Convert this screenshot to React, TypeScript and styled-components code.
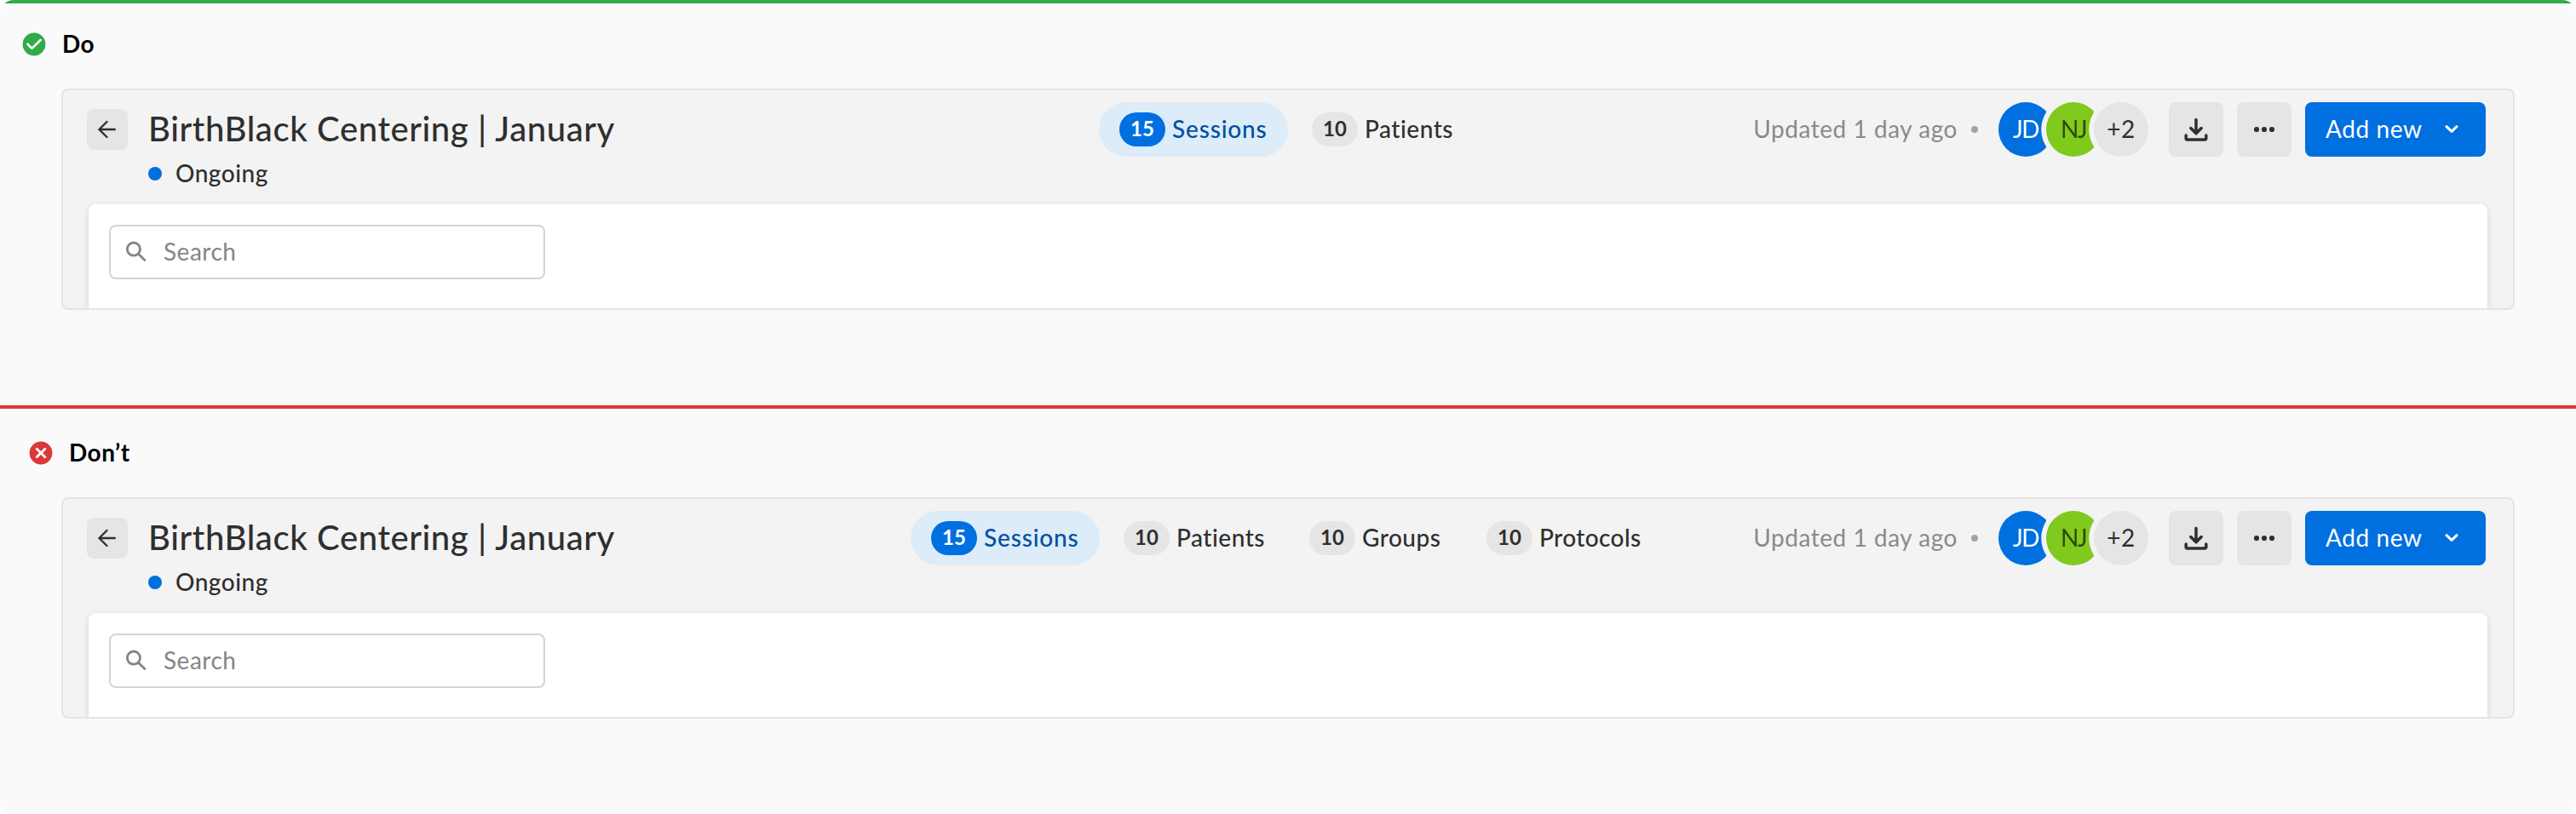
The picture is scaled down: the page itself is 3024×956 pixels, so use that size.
import React from 'react';
import styled, { createGlobalStyle, css } from 'styled-components';

const GlobalStyle = createGlobalStyle`
  *, *::before, *::after { box-sizing: border-box; }
  body {
    margin: 0;
    background: #ffffff;
    color: #2f2f2f;
    font-family: Lato, "Open Sans", "Liberation Sans", sans-serif;
    font-size: 28px;
    line-height: 38px;
    -webkit-font-smoothing: antialiased;
  }
  svg { display: block; flex: none; }
`;

const Page = styled.main`
  width: 3024px;
  height: 956px;
  border-radius: 16px;
  overflow: hidden;
  background: #fafafa;
`;

const Example = styled.section<{ $color: string; $height: number }>`
  height: ${(p) => p.$height}px;
  border-top: 4px solid ${(p) => p.$color};
  padding: ${(p) => p.$height - 448}px 72px 0 0;
`;

const Verdict = styled.h2<{ $indent: number; $after: number }>`
  display: flex;
  align-items: center;
  gap: 19px;
  height: 40px;
  margin: 0 0 ${(p) => p.$after}px;
  padding-left: ${(p) => p.$indent}px;
  color: #000000;
  font-size: 28px;
  font-weight: 700;
`;

const Label = styled.span<{ $spacing?: number; $width?: number }>`
  padding-bottom: 2px;
  letter-spacing: ${(p) => p.$spacing ?? 0.5}px;
  white-space: nowrap;
  ${(p) => p.$width && css`width: ${p.$width}px;`}
`;

const Card = styled.div`
  height: 260px;
  margin-left: 72px;
  padding: 14px 30px 0 28px;
  border: 2px solid #e4e4e4;
  border-radius: 8px;
  background: #f3f3f3;
  overflow: hidden;
`;

const Header = styled.header`
  display: grid;
  grid-template-columns: 1fr auto 1fr;
  align-items: start;
  height: 120px;
  margin-right: 2px;
`;

const Heading = styled.div`
  display: flex;
  gap: 24px;
  padding-top: 8px;
`;

const BackButton = styled.button`
  display: grid;
  place-items: center;
  width: 48px;
  height: 48px;
  padding: 0;
  border: 0;
  border-radius: 8px;
  background: #e5e5e5;
`;

const Title = styled.h1`
  margin: -1px 0 8px;
  font-size: 40px;
  font-weight: 500;
  line-height: 48px;
  letter-spacing: 0.61px;
  white-space: nowrap;
`;

const Status = styled.div`
  display: flex;
  align-items: center;
  gap: 16px;
  height: 42px;
  font-weight: 500;

  &::before {
    content: '';
    width: 16px;
    height: 16px;
    border-radius: 50%;
    background: #0070e0;
  }
`;

const Tabs = styled.nav`
  display: flex;
  gap: 4px;
`;

const Tab = styled.a<{ $active?: boolean }>`
  display: flex;
  align-items: center;
  gap: 8px;
  height: 64px;
  padding: 0 24px;
  border-radius: 32px;
  font-weight: 500;
  color: ${(p) => (p.$active ? '#0050a0' : '#2f2f2f')};
  background: ${(p) => (p.$active ? '#dcecf9' : 'transparent')};
`;

const Count = styled.span<{ $active?: boolean }>`
  display: grid;
  place-items: center;
  width: 54px;
  height: 40px;
  padding-bottom: 2px;
  border-radius: 20px;
  font-size: 24px;
  font-weight: 700;
  color: ${(p) => (p.$active ? '#ffffff' : '#2f2f2f')};
  background: ${(p) => (p.$active ? '#0070e0' : '#e5e5e5')};
`;

const Actions = styled.div`
  display: flex;
  justify-content: flex-end;
  align-items: center;
`;

const Updated = styled.span`
  display: flex;
  align-items: center;
  color: #8a8a8a;

  &::after {
    content: '';
    width: 8px;
    height: 8px;
    margin: 0 24px 0 16px;
    border-radius: 50%;
    background: #a3a3a3;
  }
`;

const Avatars = styled.div`
  display: flex;
  margin-right: 24px;
`;

const AvatarSlot = styled.div<{ $cut?: boolean }>`
  width: ${(p) => (p.$cut ? 56 : 64)}px;
  height: 64px;
  overflow: hidden;
  ${(p) =>
    p.$cut &&
    css`
      mask-image: radial-gradient(circle at 88px 32px, transparent 37.2px, #000 38.2px);
    `}
`;

const Avatar = styled.div<{ $bg: string; $fg: string }>`
  display: grid;
  place-items: center;
  width: 64px;
  height: 64px;
  border-radius: 50%;
  color: ${(p) => p.$fg};
  background: ${(p) => p.$bg};
`;

const IconButton = styled.button`
  display: grid;
  place-items: center;
  width: 64px;
  height: 64px;
  margin-right: 16px;
  padding: 0;
  border: 0;
  border-radius: 8px;
  background: #e5e5e5;
`;

const PrimaryButton = styled.button`
  display: flex;
  align-items: center;
  justify-content: space-between;
  width: 212px;
  height: 64px;
  padding: 0 32px 0 24px;
  border: 0;
  border-radius: 8px;
  color: #ffffff;
  background: #0070e0;
  font: inherit;
`;

const Panel = styled.div`
  height: 140px;
  margin-left: 2px;
  padding: 24px;
  border-radius: 8px 8px 0 0;
  background: #ffffff;
  box-shadow: 0 2px 8px rgba(0, 0, 0, 0.12);
`;

const SearchField = styled.div`
  display: flex;
  align-items: center;
  gap: 19px;
  width: 512px;
  height: 64px;
  padding-left: 17px;
  border: 2px solid #d4d4d4;
  border-radius: 8px;
  background: #ffffff;
  color: #858585;
`;

const CheckIcon = () => (
  <svg width="28" height="28" viewBox="0 0 28 28" fill="none">
    <circle cx="14" cy="14" r="13.4" fill="#30ab48" />
    <path d="M6.4 13.8l5 5.1L21.6 9" stroke="#fff" strokeWidth="2.7" strokeLinecap="round" strokeLinejoin="round" />
  </svg>
);

const CrossIcon = () => (
  <svg width="28" height="28" viewBox="0 0 28 28" fill="none">
    <circle cx="14" cy="14" r="13.4" fill="#dc3838" />
    <path d="M9.2 9.2l9.6 9.6M18.8 9.2l-9.6 9.6" stroke="#fff" strokeWidth="2.8" strokeLinecap="round" />
  </svg>
);

const BackIcon = () => (
  <svg width="24" height="24" viewBox="0 0 24 24" fill="none" stroke="#2f2f2f" strokeWidth="2.4" strokeLinecap="round" strokeLinejoin="round">
    <path d="M20.8 12H2.4M11.5 3l-9.1 9 9.1 9" />
  </svg>
);

const DownloadIcon = () => (
  <svg width="32" height="32" viewBox="0 0 32 32" fill="none" stroke="#2f2f2f" strokeWidth="3.5" strokeLinecap="round" strokeLinejoin="round">
    <path d="M16 4.4v16.4M9.8 14.6l6.2 6.2 6.2-6.2" />
    <path d="M4.2 22.9v3.7a1.4 1.4 0 0 0 1.4 1.4h20.8a1.4 1.4 0 0 0 1.4-1.4v-3.7" />
  </svg>
);

const MoreIcon = () => (
  <svg width="28" height="8" viewBox="0 0 28 8" fill="#2f2f2f">
    <circle cx="5" cy="4" r="3.1" />
    <circle cx="14" cy="4" r="3.1" />
    <circle cx="23" cy="4" r="3.1" />
  </svg>
);

const ChevronIcon = () => (
  <svg width="16" height="12" viewBox="0 0 16 12" fill="none" stroke="#fff" strokeWidth="3" strokeLinecap="round" strokeLinejoin="round">
    <path d="M2 2.7l6 5.6 6-5.6" />
  </svg>
);

const SearchIcon = () => (
  <svg width="26" height="26" viewBox="0 0 26 26" fill="none" stroke="#858585" strokeLinecap="round">
    <circle cx="9.9" cy="9.6" r="7.6" strokeWidth="2.8" />
    <path d="M15.7 15.4l7.2 7.2" strokeWidth="2.8" />
  </svg>
);

type TabItem = { count: number; label: string; spacing: number; width: number };

const tabItems: TabItem[] = [
  { count: 15, label: 'Sessions', spacing: 0.84, width: 112 },
  { count: 10, label: 'Patients', spacing: 0.52, width: 104 },
  { count: 10, label: 'Groups', spacing: 0.5, width: 94 },
  { count: 10, label: 'Protocols', spacing: 0.4, width: 120 },
];

function SessionCard({ tabs }: { tabs: TabItem[] }) {
  return (
    <Card>
      <Header>
        <Heading>
          <BackButton aria-label="Back">
            <BackIcon />
          </BackButton>
          <div>
            <Title>BirthBlack Centering | January</Title>
            <Status>
              <Label>Ongoing</Label>
            </Status>
          </div>
        </Heading>
        <Tabs>
          {tabs.map((tab, i) => (
            <Tab key={tab.label} $active={i === 0}>
              <Count $active={i === 0}>{tab.count}</Count>
              <Label $spacing={tab.spacing} $width={tab.width}>
                {tab.label}
              </Label>
            </Tab>
          ))}
        </Tabs>
        <Actions>
          <Updated>
            <Label $spacing={0.54}>Updated 1 day ago</Label>
          </Updated>
          <Avatars>
            <AvatarSlot $cut>
              <Avatar $bg="#0070e0" $fg="#ffffff">
                <Label $spacing={-1.6}>JD</Label>
              </Avatar>
            </AvatarSlot>
            <AvatarSlot $cut>
              <Avatar $bg="#80c91d" $fg="#2c4a08">
                <Label $spacing={-1.6}>NJ</Label>
              </Avatar>
            </AvatarSlot>
            <AvatarSlot>
              <Avatar $bg="#e5e5e5" $fg="#2f2f2f">
                <Label>+2</Label>
              </Avatar>
            </AvatarSlot>
          </Avatars>
          <IconButton aria-label="Download">
            <DownloadIcon />
          </IconButton>
          <IconButton aria-label="More">
            <MoreIcon />
          </IconButton>
          <PrimaryButton>
            <Label $spacing={0.6}>Add new</Label>
            <ChevronIcon />
          </PrimaryButton>
        </Actions>
      </Header>
      <Panel>
        <SearchField>
          <SearchIcon />
          <Label>Search</Label>
        </SearchField>
      </Panel>
    </Card>
  );
}

export default function App() {
  return (
    <>
      <GlobalStyle />
      <Page>
        <Example $color="#30ab48" $height={476}>
          <Verdict $indent={26} $after={32}>
            <CheckIcon />
            <Label>Do</Label>
          </Verdict>
          <SessionCard tabs={tabItems.slice(0, 2)} />
        </Example>
        <Example $color="#dc3838" $height={480}>
          <Verdict $indent={34} $after={32}>
            <CrossIcon />
            <Label $spacing={0.5}>Don’t</Label>
          </Verdict>
          <SessionCard tabs={tabItems} />
        </Example>
      </Page>
    </>
  );
}
